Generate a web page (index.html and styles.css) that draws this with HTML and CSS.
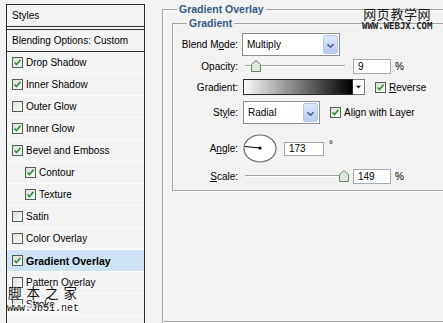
FILE: index.html
```html
<!DOCTYPE HTML>
<html>
<head>
	<meta charset="UTF-8">
	<title>Layer Style</title>
	<link rel="stylesheet" href="styles.css">
</head>
<body>

<div class="styles">
	<div class="head">Styles</div>
	<div class="blend">Blending Options: Custom</div>
	<div class="item"><span class="box"><svg viewBox="0 0 9 9"><path d="M1.5 4.5 L3.5 6.5 L7.5 1.8"/></svg></span>Drop Shadow</div>
	<div class="item"><span class="box"><svg viewBox="0 0 9 9"><path d="M1.5 4.5 L3.5 6.5 L7.5 1.8"/></svg></span>Inner Shadow</div>
	<div class="item"><span class="box"></span>Outer Glow</div>
	<div class="item"><span class="box"><svg viewBox="0 0 9 9"><path d="M1.5 4.5 L3.5 6.5 L7.5 1.8"/></svg></span>Inner Glow</div>
	<div class="item"><span class="box"><svg viewBox="0 0 9 9"><path d="M1.5 4.5 L3.5 6.5 L7.5 1.8"/></svg></span>Bevel and Emboss</div>
	<div class="item sub"><span class="box"><svg viewBox="0 0 9 9"><path d="M1.5 4.5 L3.5 6.5 L7.5 1.8"/></svg></span>Contour</div>
	<div class="item sub"><span class="box"><svg viewBox="0 0 9 9"><path d="M1.5 4.5 L3.5 6.5 L7.5 1.8"/></svg></span>Texture</div>
	<div class="item"><span class="box"></span>Satin</div>
	<div class="item"><span class="box"></span>Color Overlay</div>
	<div class="item sel"><span class="box"><svg viewBox="0 0 9 9"><path d="M1.5 4.5 L3.5 6.5 L7.5 1.8"/></svg></span>Gradient Overlay</div>
	<div class="item"><span class="box"></span>Pattern Overlay</div>
	<div class="item"><span class="box"></span>Stroke</div>
</div>

<fieldset class="outer">
	<legend>Gradient Overlay</legend>

	<fieldset class="inner">
		<legend>Gradient</legend>

		<div class="row r1">
			<span class="name">Blend M<u>o</u>de:</span>
			<div class="select wide"><span>Multiply</span><b class="drop"><svg viewBox="0 0 15 19"><path d="M4 8 L7.5 11.5 L11 8"/></svg></b></div>
		</div>

		<div class="row r2">
			<span class="name">Opacity:</span>
			<div class="slider">
				<div class="track"></div>
				<svg class="thumb" style="left: 6px" viewBox="0 0 10 12"><path d="M5 0.5 L9.5 4.5 L9.5 11.5 L0.5 11.5 L0.5 4.5 Z"/></svg>
			</div>
			<div class="num">9</div>
			<span class="unit">%</span>
		</div>

		<div class="row r3">
			<span class="name">Gradient:</span>
			<div class="grad"></div>
			<div class="gbtn"><svg viewBox="0 0 12 16"><path d="M3 6.5 H9 L6 9.5 Z"/></svg></div>
			<span class="box gap"><svg viewBox="0 0 9 9"><path d="M1.5 4.5 L3.5 6.5 L7.5 1.8"/></svg></span>
			<span><u>R</u>everse</span>
		</div>

		<div class="row r4">
			<span class="name">St<u>y</u>le:</span>
			<div class="select narrow"><span>Radial</span><b class="drop"><svg viewBox="0 0 15 19"><path d="M4 8 L7.5 11.5 L11 8"/></svg></b></div>
			<span class="box gap"><svg viewBox="0 0 9 9"><path d="M1.5 4.5 L3.5 6.5 L7.5 1.8"/></svg></span>
			<span>Align with Layer</span>
		</div>

		<div class="row r5">
			<span class="name">A<u>n</u>gle:</span>
			<svg class="dial" viewBox="0 0 34 29">
				<ellipse cx="17" cy="14.5" rx="16" ry="13.5"/>
				<line x1="17" y1="14" x2="2" y2="12.5"/>
				<circle cx="17" cy="14" r="1.6"/>
			</svg>
			<div class="num angle">173</div>
			<span class="deg">&#176;</span>
		</div>

		<div class="row r6">
			<span class="name"><u>S</u>cale:</span>
			<div class="slider">
				<div class="track"></div>
				<svg class="thumb" style="left: 94px" viewBox="0 0 10 12"><path d="M5 0.5 L9.5 4.5 L9.5 11.5 L0.5 11.5 L0.5 4.5 Z"/></svg>
			</div>
			<div class="num">149</div>
			<span class="unit">%</span>
		</div>
	</fieldset>
</fieldset>

<div class="mark webjx">
	<div class="cn">网页教学网</div>
	<div class="en">WWW.WEBJX.COM</div>
</div>

<div class="mark jb51">
	<div class="cn">脚 本 之 家</div>
	<div class="en">www.Jb51.net</div>
</div>

</body>
</html>
```

FILE: styles.css
```css
html, body {
	overflow: hidden;
}

body {
	margin: 0;
	height: 323px;
	background: #f2f2f2;
	font-family: "Liberation Sans", Arial, sans-serif;
	font-size: 10px;
	color: #000;
	display: flex;
	align-items: flex-start;
}

/* lista stylow po lewej */
.styles {
	flex: none;
	margin: 4px 0 0 6px;
	width: 139px;
	height: 319px;
	box-sizing: border-box;
	border: 1px solid #2b2b2b;
	border-bottom: none;
	background: #f4f4f4;
	overflow: hidden;
}

.head, .blend {
	height: 21px;
	line-height: 21px;
	padding-left: 5px;
	border-bottom: 1px solid #2b2b2b;
}

.blend {
	margin-top: 2px;
	border-top: 1px solid #2b2b2b;
}

.item {
	display: flex;
	align-items: center;
	height: 21px;
	padding-left: 5px;
	border-bottom: 1px solid #fdfdfd;
	white-space: nowrap;
}

.item.sub {
	padding-left: 18px;
}

.item.sel {
	background: #cfe2f4;
	font-size: 10.5px;
	font-weight: bold;
}

.box {
	display: flex;
	flex: none;
	align-items: center;
	justify-content: center;
	width: 11px;
	height: 11px;
	box-sizing: border-box;
	margin-right: 3px;
	border: 1px solid #4a6453;
	background: linear-gradient(135deg, #deded8, #fbfbfb);
}

.box svg {
	width: 9px;
	height: 9px;
	fill: none;
	stroke: #2f8f34;
	stroke-width: 1.7;
}

.box.gap {
	margin-left: 10px;
}

/* panel po prawej */
.outer {
	flex: none;
	margin: 3px 0 0 17px;
	padding: 0 0 0 8px;
	width: 300px;
	height: 320px;
	box-sizing: border-box;
	border: 2px groove #f8f8f8;
}

legend {
	padding: 0 2px;
	font-size: 10.5px;
	font-weight: bold;
	line-height: 13px;
	color: #385a85;
}

.outer > legend {
	margin-left: 5px;
}

.inner {
	margin: 1px 0 0 0;
	padding: 3px 0 6px 0;
	width: 290px;
	border: 2px groove #f8f8f8;
}

.inner > legend {
	margin-left: 13px;
}

.row {
	display: flex;
	align-items: center;
	white-space: nowrap;
}

.name {
	flex: none;
	width: 64px;
	margin-right: 4px;
	text-align: right;
}

.r1 { height: 23px; }
.r2 { height: 16px; margin-top: 2px; }
.r3 { height: 16px; margin-top: 5px; }
.r4 { height: 23px; margin-top: 6px; }
.r5 { height: 29px; margin-top: 10px; }
.r6 { height: 16px; margin-top: 5px; }

.select {
	display: flex;
	flex: none;
	height: 23px;
	box-sizing: border-box;
	padding: 1px;
	border: 1px solid #8e8e8e;
	background: #fff;
}

.select span {
	flex: 1;
	padding-left: 3px;
	line-height: 19px;
}

.wide { width: 98px; }
.narrow { width: 77px; margin-left: 1px; }

.drop {
	display: flex;
	width: 15px;
	box-sizing: border-box;
	border: 1px solid #b3c5ea;
	border-radius: 2px;
	background: linear-gradient(#dfe8fb, #b8cbf3);
}

.drop svg {
	width: 13px;
	height: 19px;
	fill: none;
	stroke: #4a5f86;
	stroke-width: 1.8;
}

.slider {
	position: relative;
	flex: none;
	width: 100px;
	height: 16px;
	margin-left: 3px;
}

.track {
	margin-top: 7px;
	height: 1px;
	background: #a2a2a2;
	border-bottom: 1px solid #fff;
}

.thumb {
	position: absolute;
	top: 2px;
	width: 10px;
	height: 12px;
	fill: #dbe9dc;
	stroke: #6f806f;
}

.num {
	flex: none;
	width: 38px;
	height: 15px;
	box-sizing: border-box;
	margin-left: 8px;
	padding-left: 4px;
	line-height: 13px;
	border: 1px solid #a3acb5;
	background: #fff;
}

.num.angle {
	width: 40px;
	height: 14px;
	margin-left: 7px;
	line-height: 12px;
}

.unit {
	margin-left: 4px;
}

.deg {
	align-self: flex-start;
	margin: 5px 0 0 5px;
	color: #000;
}

.grad {
	flex: none;
	width: 110px;
	height: 16px;
	box-sizing: border-box;
	margin-left: 1px;
	border: 1px solid #2a2a2a;
	background: linear-gradient(to right, #fafafa, #000);
}

.gbtn {
	flex: none;
	width: 12px;
	height: 16px;
	box-sizing: border-box;
	border: 1px solid #7a7a7a;
	border-left: none;
	background: #fff;
}

.gbtn svg {
	display: block;
	width: 11px;
	height: 14px;
}

.dial {
	flex: none;
	width: 34px;
	height: 29px;
	margin-left: 1px;
}

.dial ellipse {
	fill: #fff;
	stroke: #6d6d6d;
	stroke-width: 1.2;
}

.dial line {
	stroke: #000;
	stroke-width: 1;
}

/* znaki wodne */
.mark {
	position: absolute;
}

.webjx {
	left: 362px;
	top: 6px;
	text-align: center;
	color: #1a1a1a;
}

.webjx .cn {
	font: 13px "Noto Sans CJK SC", sans-serif;
	line-height: 16px;
	letter-spacing: 0.6px;
}

.webjx .en {
	font: bold 9px "DejaVu Sans Mono", monospace;
	line-height: 9px;
}

.jb51 {
	left: 7px;
	top: 284px;
	color: #111;
}

.jb51 .cn {
	font: 13.5px "Noto Sans CJK SC", sans-serif;
	line-height: 17px;
	padding-left: 1px;
	word-spacing: 2px;
}

.jb51 .en {
	margin-top: 3px;
	font: 10px "Liberation Mono", monospace;
	line-height: 10px;
	background: rgba(255, 255, 255, 0.6);
}
```
